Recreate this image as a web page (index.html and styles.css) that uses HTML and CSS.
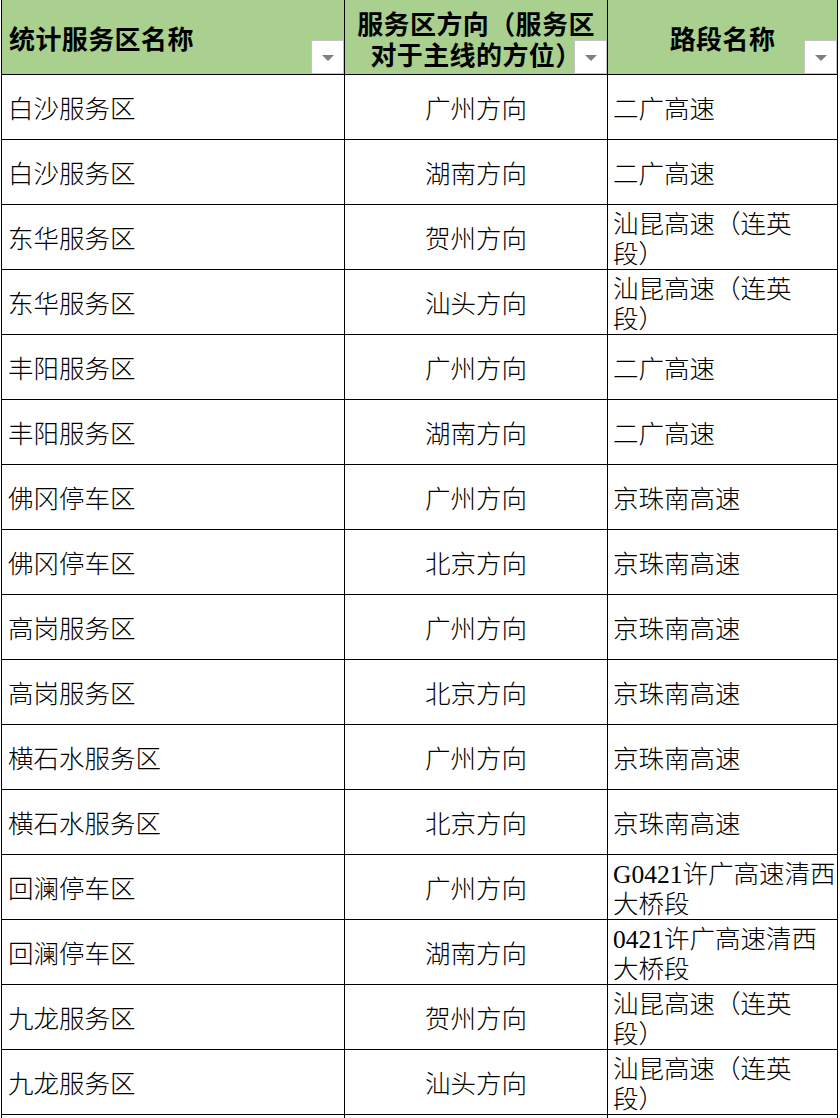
FILE: index.html
```html
<!DOCTYPE html>
<html lang="zh-CN">
<head>
<meta charset="utf-8">
<title>服务区列表</title>
<link rel="stylesheet" href="styles.css">
</head>
<body>
<div class="sheet">
  <div class="cell head left">统计服务区名称<span class="filter"></span></div>
  <div class="cell head center">服务区方向（服务区<br>对于主线的方位）<span class="filter"></span></div>
  <div class="cell head center">路段名称<span class="filter"></span></div>

  <div class="cell left">白沙服务区</div><div class="cell center">广州方向</div><div class="cell left">二广高速</div>
  <div class="cell left">白沙服务区</div><div class="cell center">湖南方向</div><div class="cell left">二广高速</div>
  <div class="cell left">东华服务区</div><div class="cell center">贺州方向</div><div class="cell left">汕昆高速（连英<br>段）</div>
  <div class="cell left">东华服务区</div><div class="cell center">汕头方向</div><div class="cell left">汕昆高速（连英<br>段）</div>
  <div class="cell left">丰阳服务区</div><div class="cell center">广州方向</div><div class="cell left">二广高速</div>
  <div class="cell left">丰阳服务区</div><div class="cell center">湖南方向</div><div class="cell left">二广高速</div>
  <div class="cell left">佛冈停车区</div><div class="cell center">广州方向</div><div class="cell left">京珠南高速</div>
  <div class="cell left">佛冈停车区</div><div class="cell center">北京方向</div><div class="cell left">京珠南高速</div>
  <div class="cell left">高岗服务区</div><div class="cell center">广州方向</div><div class="cell left">京珠南高速</div>
  <div class="cell left">高岗服务区</div><div class="cell center">北京方向</div><div class="cell left">京珠南高速</div>
  <div class="cell left">横石水服务区</div><div class="cell center">广州方向</div><div class="cell left">京珠南高速</div>
  <div class="cell left">横石水服务区</div><div class="cell center">北京方向</div><div class="cell left">京珠南高速</div>
  <div class="cell left">回澜停车区</div><div class="cell center">广州方向</div><div class="cell left">G0421许广高速清西<br>大桥段</div>
  <div class="cell left">回澜停车区</div><div class="cell center">湖南方向</div><div class="cell left">0421许广高速清西<br>大桥段</div>
  <div class="cell left">九龙服务区</div><div class="cell center">贺州方向</div><div class="cell left">汕昆高速（连英<br>段）</div>
  <div class="cell left">九龙服务区</div><div class="cell center">汕头方向</div><div class="cell left">汕昆高速（连英<br>段）</div>
  <div class="cell left"></div><div class="cell center"></div><div class="cell left"></div>
</div>
</body>
</html>
```

FILE: styles.css
```css
html, body {
  margin: 0;
  padding: 0;
  background: #ffffff;
  height: 1118px;
  overflow: hidden;
}

.sheet {
  margin-left: 1px;
  border-left: 1px solid #000;
  display: grid;
  grid-template-columns: 343px 263px 230px;
  grid-template-rows: 75px;
  grid-auto-rows: 65px;
  font-family: "Liberation Serif", "Noto Sans CJK SC", serif;
  font-size: 25.5px;
  font-weight: 300;
  color: #000;
}

.cell {
  box-sizing: border-box;
  border-right: 1px solid #000;
  border-bottom: 1px solid #000;
  display: flex;
  align-items: center;
  padding-top: 5px;
  line-height: 30px;
  white-space: nowrap;
}

.cell.left {
  padding-left: 6px;
  justify-content: flex-start;
  text-align: left;
}

.cell:nth-child(3n).left {
  padding-left: 5px;
}

.cell.center {
  justify-content: center;
  text-align: center;
}

.cell.head {
  position: relative;
  background: #a9d08e;
  font-family: "Noto Sans CJK SC", sans-serif;
  font-weight: 700;
  font-size: 26px;
  line-height: 31px;
  letter-spacing: 0.4px;
  padding-top: 1px;
}

.cell.head.left {
  padding-left: 7px;
}

.filter {
  position: absolute;
  right: 0;
  bottom: 0;
  width: 33px;
  height: 34px;
  box-sizing: border-box;
  background: #fff;
  border: 1px solid #c4c4c4;
  display: flex;
  align-items: center;
  justify-content: center;
}

.filter::after {
  content: "";
  width: 0;
  height: 0;
  border-left: 6px solid transparent;
  border-right: 6px solid transparent;
  border-top: 6px solid #7f7f7f;
  margin-top: 1px;
}
```
